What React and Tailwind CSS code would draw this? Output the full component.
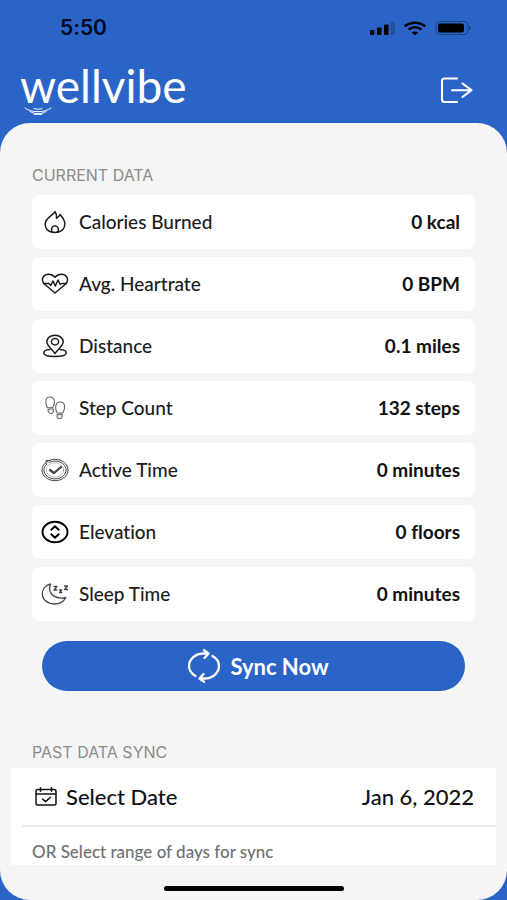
import React from "react";

function Svg({ className, box, width = 1.4, children }) {
  return (
    <svg
      className={className}
      viewBox={box}
      fill="none"
      stroke="currentColor"
      strokeWidth={width}
      strokeLinecap="round"
      strokeLinejoin="round"
      aria-hidden="true"
    >
      {children}
    </svg>
  );
}

function Flame() {
  return (
    <Svg className="h-6 w-7" box="0 0 28 24" width={1.5}>
      <path d="M14 1.500C13.200 4.800 4.200 7.500 4.200 14c0 4.600 3 7.500 7.200 8.200C9.400 19.500 11 16.200 14 15.800c3.200.4 4.600 3.700 2.500 6.400C20.800 21.300 23.800 18.300 23.800 14c0-4-2.300-6.800-4.800-9.500-.9 2-1.700 3-3.500 3.700.1-2.600-.2-4.900-1.500-6.700z" />
      <path d="M10.800 21.800c2 .9 4.600.9 6.600 0" />
    </Svg>
  );
}

function Heart() {
  return (
    <Svg className="h-6 w-7" box="0 0 28 24" width={1.5}>
      <path d="M2.800 11.500C-.5 6.700 3 2.200 7.500 2.200c2.700 0 5 1.300 6.500 3 1.500-1.700 3.800-3 6.500-3C25 2.200 28.500 6.700 25.200 11.500L14 21 2.800 11.500z" />
      <path d="M3 11.500h5l1.800 2 2.200-4.500 2.300 5L17 8l2.200 4.500 1.500-1H25" />
    </Svg>
  );
}

function Pin() {
  return (
    <Svg className="h-6 w-7" box="0 0 28 24" width={1.5}>
      <path d="M14 19.500C11.500 15.500 5.800 12 5.800 7.800 5.800 4 9.500 1.200 14 1.200S22.200 4 22.200 7.800c0 4.200-5.700 7.700-8.200 11.700z" />
      <ellipse cx="14" cy="7.800" rx="3.600" ry="3.200" />
      <path d="M8.800 15.600c-3.600.3-6 1.600-6 3.300 0 2.100 4.800 3.500 11.200 3.500s11.200-1.400 11.200-3.500c0-1.700-2.400-3-6-3.300" />
    </Svg>
  );
}

function Steps() {
  return (
    <Svg className="h-6 w-7 text-[#666]" box="0 0 28 24" width={1.1}>
      <path d="M6.500 11.800C4.600 8.500 3.200 1 8.800 1c5.200 0 5.700 5.500 3.400 10-1.700.8-3.800 1-5.700.8z" />
      <path d="M7 13.500l5-.7c.9 2.200.5 4.600-1.700 4.900-2.300.2-3.300-1.900-3.300-4.200z" />
      <path d="M16 16.700c-2.200-4-2.200-10.700 3.400-10.700 5.200 0 5.100 6.600 2.500 10.900-2 .3-4.100.3-5.900-.2z" />
      <path d="M16.200 18.400l5.200.3c.1 2.600-1.300 4.300-3.300 4-2-.3-2.500-2.300-1.900-4.300z" />
    </Svg>
  );
}

function ActiveClock() {
  return (
    <Svg className="h-6 w-7 text-[#444]" box="0 0 28 24" width={1}>
      <path d="M6.500 3.500C3.100 5.300 1 8.500 1 12c0 5.900 5.800 10.700 13 10.700S27 17.900 27 12 21.200 1.300 14 1.300c-2.600 0-5 .6-7 1.700" />
      <path d="M5 5.500v-3h4M6 6C4 7.600 2.900 9.600 2.900 12c0 4.900 5 8.900 11.100 8.900S25.100 16.900 25.100 12 20.100 3.100 14 3.100c-2.200 0-4.300.5-6 1.400" />
      <ellipse cx="14" cy="12" rx="8.700" ry="7.200" strokeOpacity=".35" />
      <path d="M9 12l4 3 7-6" strokeWidth="2.200" />
    </Svg>
  );
}

function Elevation() {
  return (
    <Svg className="h-6 w-7 text-black" box="0 0 28 24" width={1.9}>
      <ellipse cx="14" cy="12" rx="12.500" ry="10.300" />
      <path d="M10.300 9.800L14 6.200l3.700 3.600M10.300 14.200l3.700 3.600 3.700-3.600" />
    </Svg>
  );
}

function Moon() {
  return (
    <Svg className="h-6 w-7 text-[#444]" box="0 0 28 24" width={1.3}>
      <path d="M9.500 2C4.500 3.300 1.300 7.300 1.300 11.700c0 6 5.200 10.300 12 10.300 5.200 0 9.500-2.600 11.500-6.500C16 17.500 5.500 13 9.500 2z" />
      <path d="M13 4.500h3l-3 3.500h3M18.500 8h2.200l-2.200 2.500h2.200M23.500 4h3l-3 3.500h3" />
    </Svg>
  );
}

function CalendarCheck() {
  return (
    <Svg className="h-5 w-6" box="0 0 24 20" width={1.5}>
      <rect x="2" y="2.500" width="20" height="15.500" rx="1.500" />
      <path d="M2 7h20M6.500.8v3.400M17.500.8v3.400" />
      <path d="M8.500 12l3 2.600 5-4.300" />
    </Svg>
  );
}

function SyncArrows() {
  return (
    <Svg className="h-9 w-9" box="0 0 36 36" width={2.3}>
      <path d="M9.500 28C5.500 25.800 3 22 3 18 3 11 9.500 5.500 17.500 5.500H21M18 2.200l4.500 3.300-4 4.500" />
      <path d="M26.500 8C30.500 10.200 33 14 33 18c0 7-6.500 12.500-14.500 12.500H15M18 33.800l-4.500-3.300 4-4.500" />
    </Svg>
  );
}

const METRICS = [
  { label: "Calories Burned", value: "0 kcal", Icon: Flame },
  { label: "Avg. Heartrate", value: "0 BPM", Icon: Heart },
  { label: "Distance", value: "0.1 miles", Icon: Pin },
  { label: "Step Count", value: "132 steps", Icon: Steps },
  { label: "Active Time", value: "0 minutes", Icon: ActiveClock },
  { label: "Elevation", value: "0 floors", Icon: Elevation },
  { label: "Sleep Time", value: "0 minutes", Icon: Moon },
];

function StatusBar() {
  return (
    <div className="flex h-14 items-center justify-between pl-15 pr-9 text-[#030b1c]">
      <span className="font-['Inter',sans-serif] text-[21px] font-semibold">5:50</span>
      <div className="flex items-center gap-2 text-black">
        <svg className="h-4 w-7" viewBox="0 0 28 16" fill="currentColor" aria-hidden="true">
          <rect x="3" y="10" width="4.500" height="5" rx="1" />
          <rect x="10" y="7.500" width="4.500" height="7.500" rx="1" />
          <rect x="17" y="4.500" width="4.500" height="10.500" rx="1" />
          <rect x="23.500" y="2" width="4.500" height="13" rx="1" opacity=".2" />
        </svg>
        <svg className="h-4 w-6" viewBox="0 0 24 16" fill="none" stroke="currentColor" strokeWidth="2.600" aria-hidden="true">
          <path d="M1.800 6.200c5.800-4.700 14.600-4.700 20.400 0" />
          <path d="M5.500 9.500c3.700-3 9.300-3 13 0" />
          <path d="M12 15.200l-3.200-2.700c1.800-1.400 4.600-1.400 6.400 0z" fill="currentColor" stroke="none" />
        </svg>
        <svg className="h-4 w-9" viewBox="0 0 36 16" aria-hidden="true">
          <rect x="1" y="1.500" width="32" height="13" rx="4" fill="none" stroke="#000" strokeOpacity=".35" />
          <rect x="3" y="3.500" width="26" height="9" rx="2" />
          <path d="M34 6v4c2-.6 2-3.400 0-4z" opacity=".4" />
        </svg>
      </div>
    </div>
  );
}

function SectionTitle({ children }) {
  return (
    <h2 className="px-8 font-['Inter',sans-serif] text-base leading-5 text-[#8c8c8c]">{children}</h2>
  );
}

export default function App() {
  return (
    <div className="min-h-screen bg-[#2b64c7] font-['Lato',sans-serif] text-[#1c1c1c] [font-variant-ligatures:none]">
      <StatusBar />
      <header className="flex h-[67px] items-center justify-between pl-5 pr-8">
        <div className="relative pb-2 text-white">
          <h1 className="text-[46px] leading-[50px]">wellvibe</h1>
          <svg
            className="absolute bottom-1 left-1 h-2 w-7"
            viewBox="0 0 28 8"
            fill="none"
            stroke="currentColor"
            strokeLinecap="round"
            aria-hidden="true"
          >
            <path d="M1 1c6 5 20 5 26 0M6 4.500c5 3 11 3 16 0M10 1.500c2 1 6 1 8 0M10 7.300h8" />
          </svg>
        </div>
        <button type="button" aria-label="Log out" className="text-white">
          <Svg className="h-8 w-9" box="0 0 36 32" width={2.1}>
            <path d="M18 4.500H5.500c-1.500 0-2.500 1-2.500 2.500v18.500c0 1.500 1 2.500 2.500 2.500H18" />
            <path d="M13 16.200h19M23.500 9.500l9 6.700-9 6.800" />
          </Svg>
        </button>
      </header>

      <main className="rounded-[30px] bg-[#f5f5f5] pt-[42px] pb-[9px]">
        <SectionTitle>CURRENT DATA</SectionTitle>
        <dl className="mx-8 mt-[10px] flex flex-col gap-2">
          {METRICS.map(({ label, value, Icon }) => (
            <div key={label} className="flex h-[54px] items-center rounded-lg bg-white pr-[15px] pl-[9px]">
              <Icon />
              <dt className="ml-[10px] text-[19px] leading-6 font-medium">{label}</dt>
              <dd className="ml-auto text-[19px] leading-6 font-bold text-[#111]">{value}</dd>
            </div>
          ))}
        </dl>

        <div className="mt-5 px-[42px]">
          <button
            type="button"
            className="flex h-[50px] w-full items-center justify-center gap-2 rounded-full bg-[#2b64c7] pl-2 text-[22px] font-bold text-white"
          >
            <SyncArrows />
            Sync Now
          </button>
        </div>

        <div className="mt-[51px]">
          <SectionTitle>PAST DATA SYNC</SectionTitle>
          <div className="mx-[11px] mt-[6px] bg-white">
            <button type="button" className="flex h-[57px] w-full items-center pr-[22px] pl-[23px] text-[22px] font-medium text-[#111]">
              <CalendarCheck />
              <span className="ml-2">Select Date</span>
              <time dateTime="2022-01-06" className="ml-auto">Jan 6, 2022</time>
            </button>
            <div className="ml-[11px] border-t-2 border-[#ededed]" />
            <p className="px-[21px] pt-[15px] pb-[3px] text-[17px] leading-5 font-medium text-[#707070]">
              OR Select range of days for sync
            </p>
          </div>
        </div>

        <div className="mx-auto mt-[21px] h-[5px] w-[180px] rounded-full bg-black" />
      </main>
    </div>
  );
}
